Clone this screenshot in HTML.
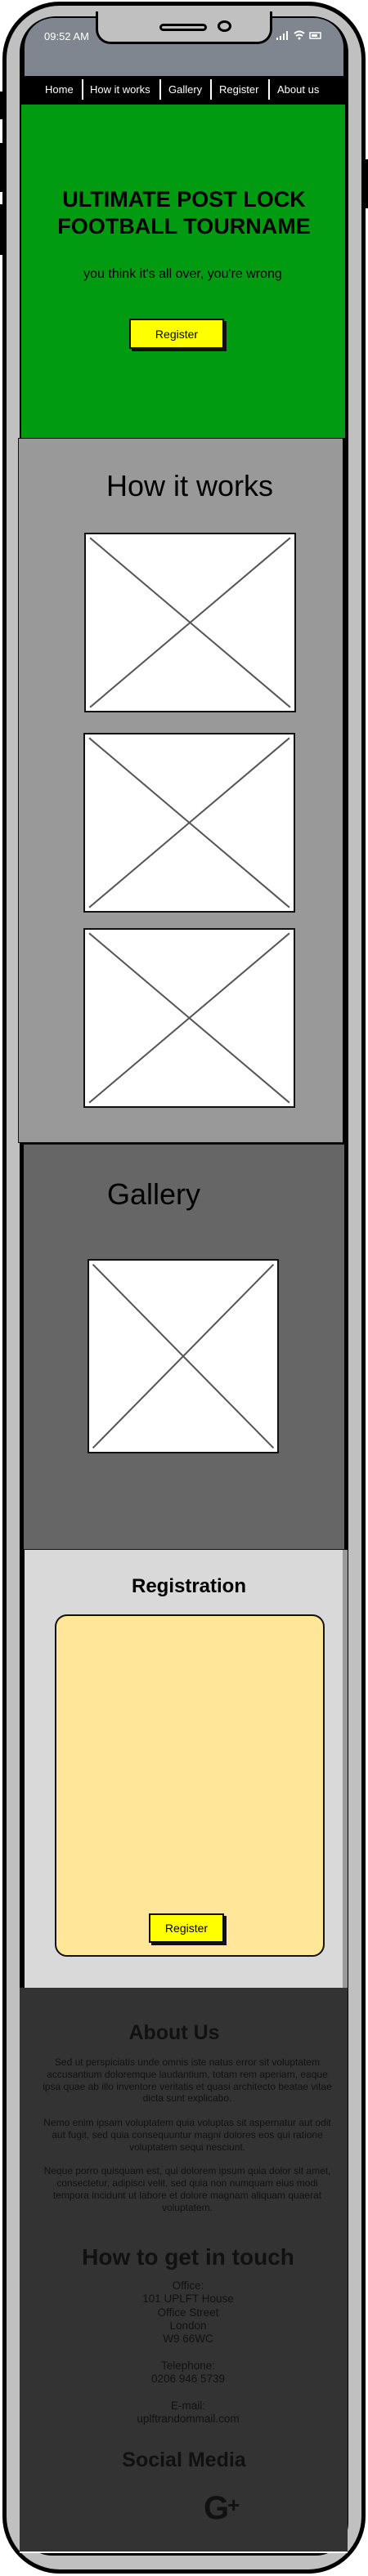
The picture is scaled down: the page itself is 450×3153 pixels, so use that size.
<!DOCTYPE html>
<html><head><meta charset="utf-8"><style>
*{margin:0;padding:0;box-sizing:border-box}
body{width:450px;height:3153px;background:#fff;position:relative;overflow:hidden;font-family:"Liberation Sans",sans-serif}
.a{position:absolute}
.c{text-align:center}
.ph{left:3px;top:2px;width:444px;height:3148px;background:#c0c0c0;border:5px solid #000;border-radius:70px}
.x{position:absolute;background:#fff;border:2px solid #111}
.x svg{position:absolute;left:0;top:0;width:100%;height:100%}
.btn{background:#ff0;border:2px solid #111;box-shadow:3px 3px 0 #111;font-size:14px;color:#000;display:flex;align-items:center;justify-content:center}
.f{color:#111}
</style></head><body>
<div class="a" style="left:0;top:112px;width:4px;height:34px;background:#000"></div>
<div class="a" style="left:0;top:175px;width:4px;height:60px;background:#000"></div>
<div class="a" style="left:0;top:250px;width:4px;height:62px;background:#000"></div>
<div class="a" style="left:446px;top:195px;width:4px;height:60px;background:#000"></div>
<div class="a ph"></div>
<!-- screen -->
<div class="a" style="left:24px;top:20px;width:402px;height:3108px;background:#000;border-radius:44px 44px 40px 40px"></div>
<div class="a" style="left:30px;top:22px;width:390px;height:71px;background:#80868f;border-radius:36px 36px 0 0"></div>
<!-- notch -->
<div class="a" style="left:117px;top:14px;width:216px;height:40px;background:#c0c0c0;border:3px solid #000;border-top:none;border-radius:0 0 18px 18px"></div>
<div class="a" style="left:195px;top:29px;width:58px;height:9px;border:3px solid #000;border-radius:5px"></div>
<div class="a" style="left:266px;top:25px;width:17px;height:14px;border:3px solid #000;border-radius:50%"></div>
<div class="a" style="left:54px;top:37px;font-size:13px;color:#fff">09:52 AM</div>
<svg class="a" style="left:336px;top:36px" width="60" height="14" viewBox="0 0 60 14"><rect x="2" y="10" width="2" height="3" fill="#fff"/><rect x="6" y="8" width="2" height="5" fill="#fff"/><rect x="10" y="5" width="2" height="8" fill="#fff"/><rect x="14" y="2" width="2" height="11" fill="#fff"/><path d="M24 5 Q30 0 36 5 M26 8 Q30 5 34 8" stroke="#fff" stroke-width="2" fill="none"/><circle cx="30" cy="11" r="1.5" fill="#fff"/><rect x="43" y="4" width="13" height="7" fill="none" stroke="#fff" stroke-width="1.5"/><rect x="45" y="6" width="7" height="3" fill="#fff"/></svg>
<!-- nav -->
<div class="a" style="left:25px;top:93px;width:397px;height:35px;background:#000"></div>
<div class="a" style="left:25px;top:99px;width:397px;font-size:13px;color:#fff;line-height:22px">
<span class="a" style="left:30px">Home</span><span class="a" style="left:85px">How it works</span><span class="a" style="left:181px">Gallery</span><span class="a" style="left:243px">Register</span><span class="a" style="left:314px">About us</span></div>
<div class="a" style="left:100px;top:97px;width:2px;height:25px;background:#fff"></div>
<div class="a" style="left:195px;top:97px;width:2px;height:25px;background:#fff"></div>
<div class="a" style="left:257px;top:97px;width:2px;height:25px;background:#fff"></div>
<div class="a" style="left:328px;top:97px;width:2px;height:25px;background:#fff"></div>
<!-- hero -->
<div class="a" style="left:26px;top:128px;width:396px;height:408px;background:#009b10"></div>
<div class="a c" style="left:25px;top:228px;width:400px;font-size:27px;font-weight:bold;line-height:33px;color:#000">ULTIMATE POST LOCK<br>FOOTBALL TOURNAME</div>
<div class="a c" style="left:25px;top:327px;width:397px;font-size:16px;color:#000">you think it's all over, you're wrong</div>
<div class="a btn" style="left:158px;top:390px;width:116px;height:37px;font-size:14px">Register</div>
<!-- how it works -->
<div class="a" style="left:22px;top:536px;width:400px;height:863px;background:#999;border:1px solid #111;border-right:3px solid #000"></div>
<div class="a c" style="left:22px;top:574px;width:420px;font-size:36px;color:#000">How it works</div>
<div class="x" style="left:103px;top:652px;width:259px;height:220px"><svg viewBox="0 0 100 100" preserveAspectRatio="none"><path d="M2 2L98 98M98 2L2 98" stroke="#555" stroke-width="1.2" vector-effect="non-scaling-stroke" style="stroke-width:2px"/></svg></div>
<div class="x" style="left:102px;top:897px;width:259px;height:220px"><svg viewBox="0 0 100 100" preserveAspectRatio="none"><path d="M2 2L98 98M98 2L2 98" stroke="#555" vector-effect="non-scaling-stroke" style="stroke-width:2px"/></svg></div>
<div class="x" style="left:102px;top:1136px;width:259px;height:220px"><svg viewBox="0 0 100 100" preserveAspectRatio="none"><path d="M2 2L98 98M98 2L2 98" stroke="#555" vector-effect="non-scaling-stroke" style="stroke-width:2px"/></svg></div>
<!-- gallery -->
<div class="a" style="left:24px;top:1400px;width:400px;height:497px;background:#666;border:1px solid #111;border-left:5px solid #000;border-right:3px solid #000"></div>
<div class="a" style="left:131px;top:1441px;font-size:36px;color:#000">Gallery</div>
<div class="x" style="left:107px;top:1541px;width:234px;height:238px"><svg viewBox="0 0 100 100" preserveAspectRatio="none"><path d="M2 2L98 98M98 2L2 98" stroke="#555" vector-effect="non-scaling-stroke" style="stroke-width:2px"/></svg></div>
<!-- registration -->
<div class="a" style="left:30px;top:1897px;width:395px;height:538px;background:#d9d9d9;border-right:6px solid #999"></div>
<div class="a c" style="left:30px;top:1928px;width:402px;font-size:24px;font-weight:bold;color:#000">Registration</div>
<div class="a" style="left:67px;top:1976px;width:330px;height:419px;background:#ffe699;border:2px solid #111;border-radius:15px"></div>
<div class="a btn" style="left:182px;top:2342px;width:92px;height:36px;font-size:14px">Register</div>
<!-- footer -->
<div class="a" style="left:24px;top:2433px;width:401px;height:692px;background:#333;border-bottom:2px solid #fff"></div>
<div class="a c f" style="left:24px;top:2474px;width:378px;font-size:25px;font-weight:bold">About Us</div>
<div class="a c f" style="left:47px;top:2517px;width:364px;font-size:12px;line-height:14.8px">Sed ut perspiciatis unde omnis iste natus error sit voluptatem accusantium doloremque laudantium, totam rem aperiam, eaque ipsa quae ab illo inventore veritatis et quasi architecto beatae vitae dicta sunt explicabo.<br><br>Nemo enim ipsam voluptatem quia voluptas sit aspernatur aut odit aut fugit, sed quia consequuntur magni dolores eos qui ratione voluptatem sequi nesciunt.<br><br>Neque porro quisquam est, qui dolorem ipsum quia dolor sit amet, consectetur, adipisci velit, sed quia non numquam eius modi tempora incidunt ut labore et dolore magnam aliquam quaerat voluptatem.</div>
<div class="a c f" style="left:24px;top:2747px;width:412px;font-size:28px;font-weight:bold">How to get in touch</div>
<div class="a c f" style="left:24px;top:2790px;width:412px;font-size:13.5px;line-height:16.3px">Office:<br>101 UPLFT House<br>Office Street<br>London<br>W9 66WC<br><br>Telephone:<br>0206 946 5739<br><br>E-mail:<br>uplftrandommail.com</div>
<div class="a c f" style="left:24px;top:2997px;width:402px;font-size:25px;font-weight:bold">Social Media</div>
<div class="a f" style="left:249px;top:3048px;font-size:40px;font-weight:bold;letter-spacing:-2px">G<span style="font-size:26px;vertical-align:8px">+</span></div>
</body></html>
